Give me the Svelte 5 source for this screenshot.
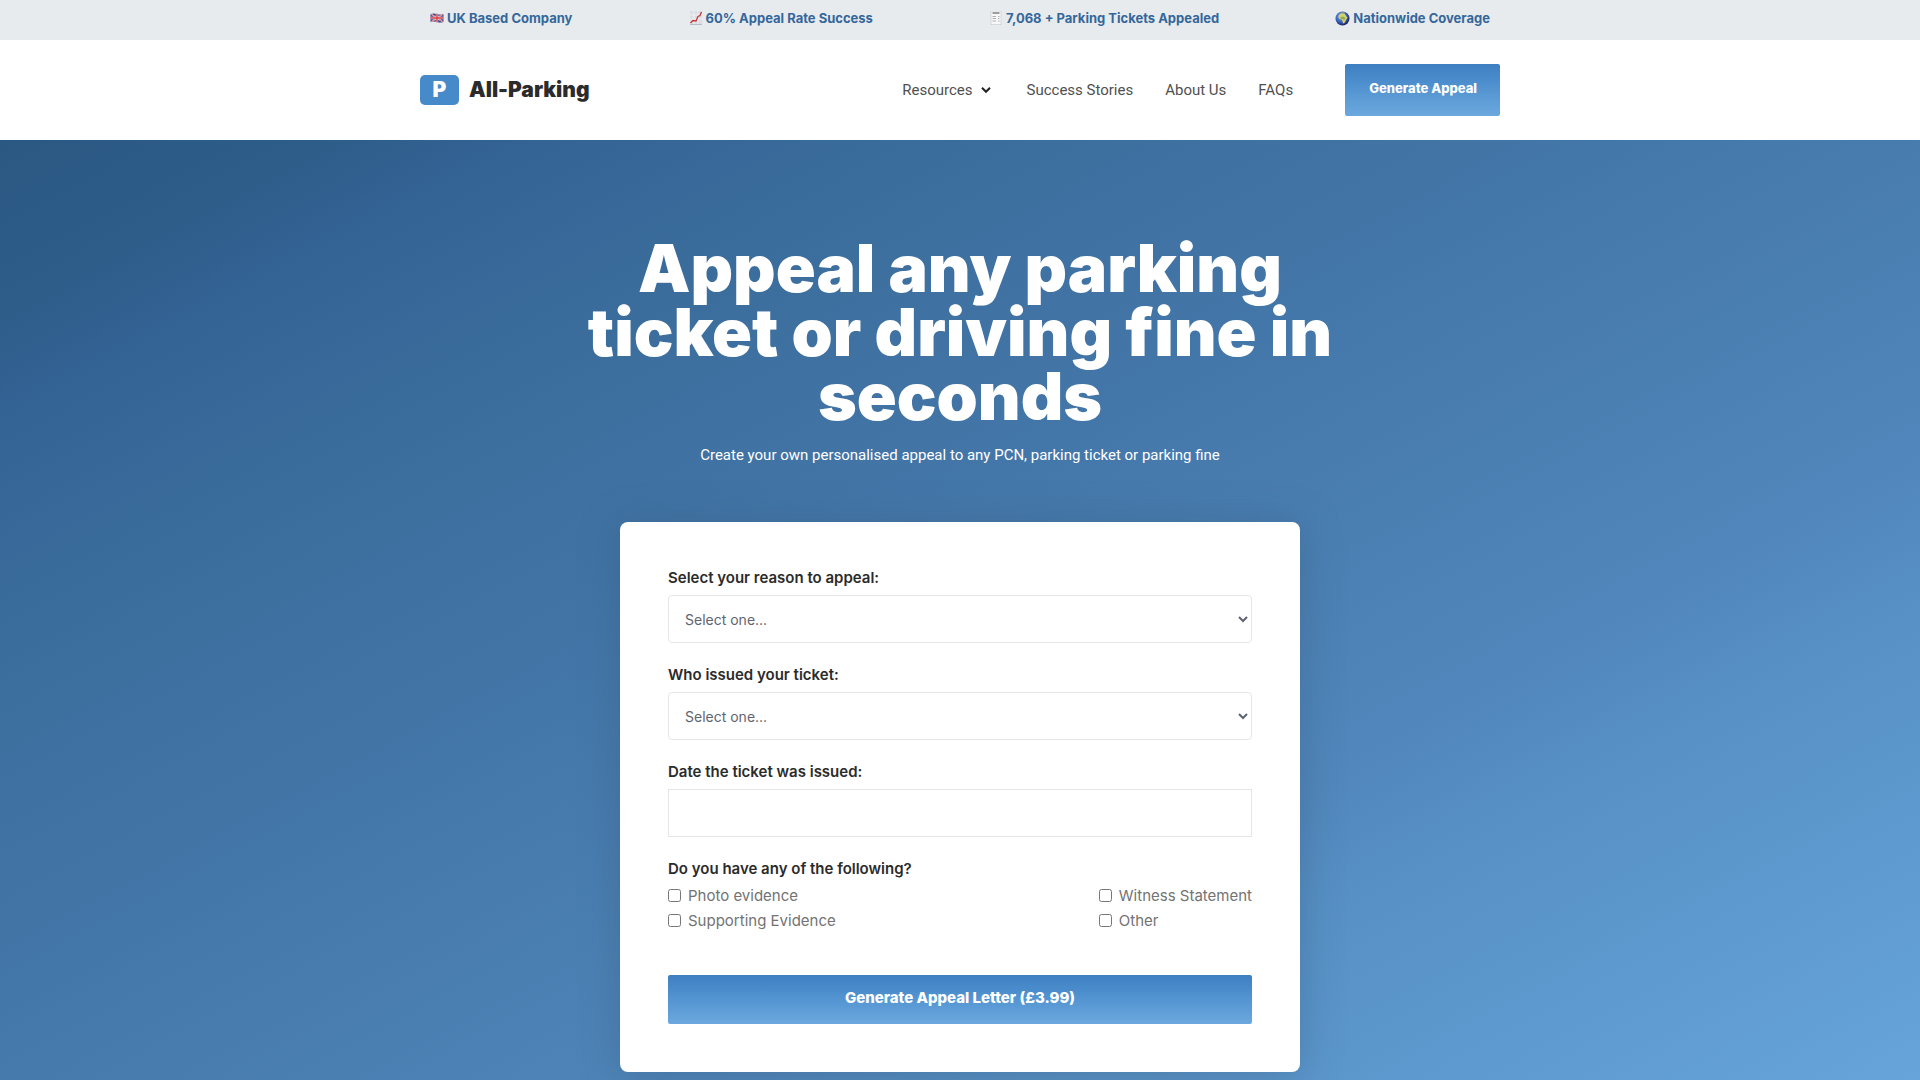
<script lang="ts">
  const issuers = ['Council', 'Private company', 'Police'];
  const reasons = ['Unclear signage', 'Faulty machine', 'Medical emergency'];
  const links = ['Success Stories', 'About Us', 'FAQs'];
  const evidence = [
    ['Photo evidence', 'Supporting Evidence'],
    ['Witness Statement', 'Other'],
  ];
  let reason = $state('');
  let issuer = $state('');
</script>

<div class="page">
  <div class="strip">
    <ul class="wrap facts">
      <li>
        <svg width="14" height="14" viewBox="0 0 14 14" aria-hidden="true">
          <path d="M0.500 3Q4 2 7 3T13.500 3V11Q10 12 7 11T0.500 11Z" fill="#34458a" />
          <path d="M1 3 13 11M13 3 1 11" stroke="#f3e9ec" stroke-width="1.500" />
          <path d="M1 3 13 11M13 3 1 11" stroke="#d8404a" stroke-width=".7" />
          <path d="M7 2.800V11.200M.5 7H13.500" stroke="#f7eeee" stroke-width="2.4" />
          <path d="M7 2.800V11.200M.5 7H13.500" stroke="#d93643" stroke-width="1.4" />
        </svg>
        UK Based Company
      </li>
      <li>
        <svg width="14" height="14" viewBox="0 0 14 14" aria-hidden="true">
          <rect x="1" y="0" width="12" height="14" fill="#d9dee4" />
          <path d="M1 4H13M1 8H13M5 0V14M9 0V14" stroke="#f4f6f8" stroke-width=".8" />
          <path d="M1 13.500H13" stroke="#b4bcc5" />
          <path d="M1.500 12 4 9.500 7 10 9 5.500 11 4.500 12.500 1" fill="none" stroke="#c93636" stroke-width="1.3" />
        </svg>
        60% Appeal Rate Success
      </li>
      <li>
        <svg width="14" height="14" viewBox="0 0 14 14" aria-hidden="true">
          <path d="M2 0H12V14L11 13 10 14 9 13 8 14 7 13 6 14 5 13 4 14 3 13 2 14Z" fill="#f7f7f7" stroke="#c4c7ca" stroke-width=".6" />
          <path d="M3.500 2H10.500" stroke="#808080" stroke-width="1.500" />
          <path d="M3.500 5.500H7M9 5.500H10.500M3.500 7.500H7M9 7.500H10.500M3.500 10H7M9 10H10.500" stroke="#a5a8ab" stroke-width=".9" />
        </svg>
        7,068 + Parking Tickets Appealed
      </li>
      <li>
        <svg width="15" height="15" viewBox="0 0 15 15" aria-hidden="true">
          <defs>
            <radialGradient id="sea" cx=".4" cy=".35" r=".65">
              <stop offset="0" stop-color="#7fb6ea" />
              <stop offset=".6" stop-color="#3a62bd" />
              <stop offset="1" stop-color="#1b2468" />
            </radialGradient>
          </defs>
          <circle cx="7.500" cy="7.500" r="7" fill="url(#sea)" />
          <path d="M4 4 6 2.300 9.500 2.500 11.500 5.500 12.500 6.500 11 9 9.500 12 8 12.500 7 8.500 4.500 8 3.300 6Z" fill="#d6d070" />
          <path d="M5 6.500 8 5.500 10.500 7 9 9.500 8 8 5.500 7.500Z" fill="#8cae4c" />
          <path d="M5 1.700 9 1.200 10.500 2 7 2.300Z" fill="#8fae5a" />
        </svg>
        Nationwide Coverage
      </li>
    </ul>
  </div>

  <header class="wrap header">
    <a class="brand" href="#home"><span class="mark">P</span>All-Parking</a>
    <nav>
      <button class="menu" type="button">
        Resources
        <svg width="10" height="8" viewBox="0 0 10 8" aria-hidden="true">
          <path d="M1 1.700 5 5.800 9 1.700" fill="none" stroke="#222" stroke-width="2" />
        </svg>
      </button>
      {#each links as link}
        <a href="#{link.toLowerCase().replace(' ', '-')}">{link}</a>
      {/each}
      <a class="cta" href="#appeal">Generate Appeal</a>
    </nav>
  </header>

  <main>
    <h1>Appeal any parking ticket or driving fine in seconds</h1>
    <p>Create your own personalised appeal to any PCN, parking ticket or parking fine</p>

    <form id="appeal" onsubmit={(e) => e.preventDefault()}>
      <div class="field">
        <label for="reason">Select your reason to appeal:</label>
        <select id="reason" bind:value={reason}>
          <option value="">Select one...</option>
          {#each reasons as r}<option>{r}</option>{/each}
        </select>
      </div>
      <div class="field">
        <label for="issuer">Who issued your ticket:</label>
        <select id="issuer" bind:value={issuer}>
          <option value="">Select one...</option>
          {#each issuers as i}<option>{i}</option>{/each}
        </select>
      </div>
      <div class="field">
        <label for="date">Date the ticket was issued:</label>
        <input id="date" type="text" />
      </div>
      <fieldset>
        <legend>Do you have any of the following?</legend>
        <div class="columns">
          {#each evidence as column}
            <div class="column">
              {#each column as item}
                <label class="check"><input type="checkbox" />{item}</label>
              {/each}
            </div>
          {/each}
        </div>
      </fieldset>
      <button class="submit" type="submit">Generate Appeal Letter (£3.99)</button>
    </form>
  </main>
</div>

<style>
  :global(body) {
    margin: 0;
    background: #fff;
  }
  .page,
  .page * {
    box-sizing: border-box;
  }
  .page {
    display: flex;
    flex-direction: column;
    min-height: 100vh;
    font-family: Inter, 'Open Sans', sans-serif;
    color: #2b2b2b;
  }
  .wrap {
    width: 100%;
    max-width: 1080px;
    margin: 0 auto;
  }
  .strip {
    background: #e7ebee;
  }
  .facts {
    display: flex;
    justify-content: space-between;
    padding: 8px 10px 12px;
    list-style: none;
    font-size: 13px;
    font-weight: 700;
    line-height: 20px;
    color: #35679a;
  }
  .facts li {
    display: flex;
    align-items: center;
    gap: 3px;
    white-space: nowrap;
  }
  .header {
    display: flex;
    align-items: center;
    justify-content: space-between;
    padding: 24px 0;
  }
  a {
    color: inherit;
    text-decoration: none;
  }
  .brand {
    display: flex;
    align-items: center;
    gap: 10px;
    font-size: 21px;
    font-weight: 900;
    line-height: 30px;
  }
  .mark {
    width: 39px;
    height: 30px;
    border-radius: 5px;
    background: #478ac9;
    color: #fff;
    text-align: center;
  }
  nav {
    display: flex;
    align-items: center;
    gap: 32px;
    font-family: Roboto, sans-serif;
    font-size: 15px;
    line-height: 20px;
    color: #505050;
  }
  .menu {
    display: flex;
    align-items: center;
    gap: 8px;
    padding: 0;
    margin-right: 4px;
    border: 0;
    background: none;
    font: inherit;
    color: inherit;
  }
  .cta,
  .submit {
    border: 0;
    border-radius: 2px;
    background: linear-gradient(#3d7fc1, #4f91cf 40%, #6ca8de);
    font-family: Inter, sans-serif;
    font-weight: 800;
    color: #fff;
    text-align: center;
  }
  .cta {
    margin-left: 20px;
    padding: 14px 23px 18px 24px;
    font-size: 13px;
  }
  main {
    flex: 1;
    display: flex;
    flex-direction: column;
    align-items: center;
    padding: 96px 16px 8px;
    background: linear-gradient(152deg, #2b5883, #2e5d8a 9%, #346496 15%, #3b6d9c 26%, #4477a9 44%, #5187bc 69%, #568fc4 74%, #66a4da);
    color: #fff;
  }
  h1 {
    max-width: 780px;
    margin: 0;
    font-size: 66px;
    font-weight: 900;
    line-height: 64px;
    text-align: center;
  }
  p {
    margin: 16px 0 56px;
    font-family: Roboto, sans-serif;
    font-size: 15px;
    line-height: 22px;
    text-align: center;
  }
  form {
    width: 100%;
    max-width: 680px;
    padding: 47px 48px 48px;
    border-radius: 8px;
    background: #fff;
    box-shadow: 0 4px 40px rgba(50, 80, 110, 0.35);
    color: #2b2b2b;
    font-size: 15px;
  }
  .field {
    display: flex;
    flex-direction: column;
    gap: 8px;
    margin-bottom: 23px;
  }
  .field label,
  legend {
    padding: 0;
    font-weight: 600;
    line-height: 18px;
  }
  select,
  .field input {
    width: 100%;
    height: 48px;
    border: 1px solid #e6e6e6;
    border-radius: 4px;
    background: #fff;
    font: inherit;
    font-size: 14px;
    color: #5f6470;
  }
  select {
    padding: 0 12px;
  }
  .field input {
    padding: 0 16px;
    border-radius: 0;
  }
  fieldset {
    min-width: 0;
    margin: 0 0 42px;
    padding: 0;
    border: 0;
  }
  .columns {
    display: flex;
    justify-content: space-between;
    padding-top: 5px;
  }
  .check {
    display: flex;
    align-items: center;
    gap: 7px;
    line-height: 25px;
    color: #737373;
  }
  .check input {
    width: 13px;
    height: 13px;
    margin: 0;
  }
  .submit {
    width: 100%;
    padding: 12px 24px 15px;
    font-size: 15px;
    line-height: 22px;
  }
</style>
